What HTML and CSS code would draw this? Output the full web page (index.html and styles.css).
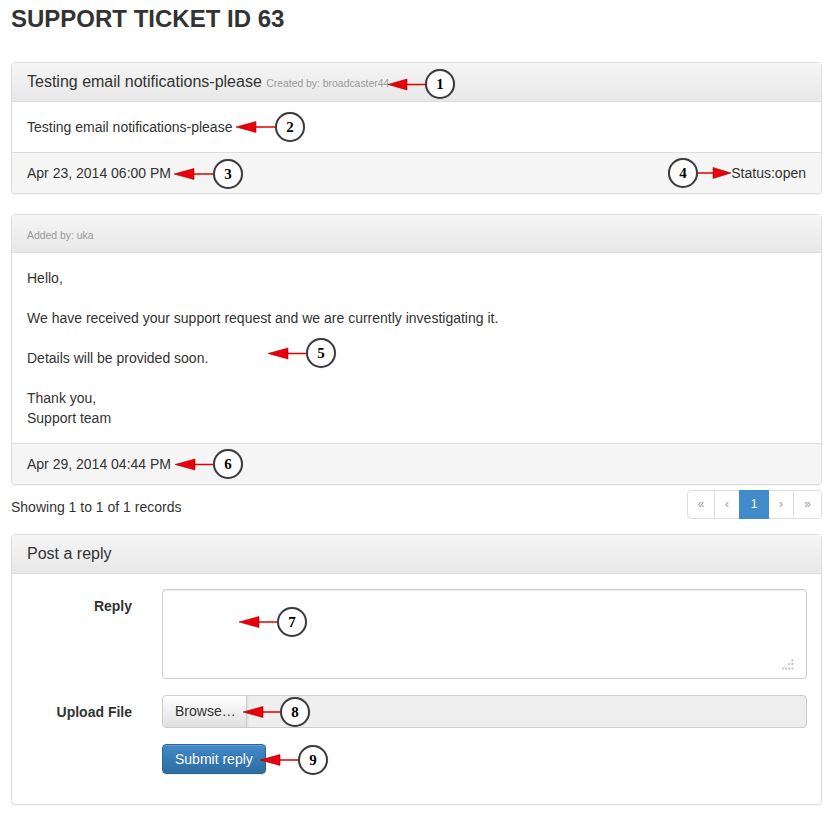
FILE: index.html
```html
<!DOCTYPE html>
<html lang="en">
<head>
<meta charset="utf-8">
<title>Support Ticket ID 63</title>
<link rel="stylesheet" href="styles.css">
</head>
<body>
<div class="canvas">
  <div class="page">
    <h1 class="title">SUPPORT TICKET ID 63</h1>

    <div class="panel">
      <div class="panel-heading">
        <h3 class="panel-title">Testing email notifications-please <small class="meta">Created by: broadcaster44</small></h3>
      </div>
      <div class="panel-body">Testing email notifications-please</div>
      <div class="panel-footer footer-split">
        <span>Apr 23, 2014 06:00 PM</span>
        <span>Status:open</span>
      </div>
    </div>

    <div class="panel panel-gap">
      <div class="panel-heading">
        <h3 class="panel-title"><small class="meta">Added by: uka</small></h3>
      </div>
      <div class="panel-body">Hello,<br><br>We have received your support request and we are currently investigating it.<br><br>Details will be provided soon.<br><br>Thank you,<br>Support team</div>
      <div class="panel-footer">Apr 29, 2014 04:44 PM</div>
    </div>

    <div class="records">
      <div class="records-info">Showing 1 to 1 of 1 records</div>
      <ul class="pagination">
        <li class="pg first">&laquo;</li>
        <li class="pg step">&lsaquo;</li>
        <li class="pg active">1</li>
        <li class="pg step">&rsaquo;</li>
        <li class="pg last">&raquo;</li>
      </ul>
    </div>

    <div class="panel reply-panel">
      <div class="panel-heading">
        <h3 class="panel-title">Post a reply</h3>
      </div>
      <div class="panel-body form-body">
        <div class="form-row">
          <label class="form-label" for="reply">Reply</label>
          <div class="textarea-wrap">
            <textarea id="reply" class="textarea"></textarea>
            <svg class="grip" width="12" height="12" viewBox="0 0 12 12">
              <rect x="9.5" y="0.5" width="1.6" height="1.6" fill="#b0b0b0"/>
              <rect x="6.3" y="4.2" width="1.6" height="1.6" fill="#b0b0b0"/>
              <rect x="9.5" y="4.2" width="1.6" height="1.6" fill="#b0b0b0"/>
              <rect x="0" y="8.8" width="1.6" height="1.6" fill="#b0b0b0"/>
              <rect x="3.2" y="8.8" width="1.6" height="1.6" fill="#b0b0b0"/>
              <rect x="6.3" y="8.8" width="1.6" height="1.6" fill="#b0b0b0"/>
              <rect x="9.5" y="8.8" width="1.6" height="1.6" fill="#b0b0b0"/>
            </svg>
          </div>
        </div>
        <div class="form-row">
          <span class="form-label">Upload File</span>
          <div class="file-input">
            <span class="browse">Browse&hellip;</span>
          </div>
        </div>
        <div class="form-row">
          <span class="form-label"></span>
          <div><button class="btn-submit" type="button">Submit reply</button></div>
        </div>
      </div>
    </div>
  </div>

  <svg class="arrows" width="835" height="830" viewBox="0 0 835 830">
    <g stroke="#e00000" stroke-width="1.5">
      <line x1="406" y1="84.5" x2="425" y2="84.5"/>
      <line x1="255" y1="127" x2="275" y2="127"/>
      <line x1="193" y1="174" x2="213" y2="174"/>
      <line x1="698" y1="173" x2="715" y2="173"/>
      <line x1="287" y1="353.5" x2="306" y2="353.5"/>
      <line x1="194" y1="464.5" x2="213" y2="464.5"/>
      <line x1="258" y1="622" x2="277" y2="622"/>
      <line x1="262" y1="712" x2="280" y2="712"/>
      <line x1="279" y1="760" x2="298" y2="760"/>
    </g>
    <g fill="#e8000b" stroke="#a80000" stroke-width="0.6">
      <polygon points="388,84.5 407,79 407,90"/>
      <polygon points="236,127 256,121.5 256,132.5"/>
      <polygon points="174,174 194,168.5 194,179.5"/>
      <polygon points="731,173 713,167.5 713,178.5"/>
      <polygon points="268,353.5 288,348 288,359"/>
      <polygon points="175,464.5 195,459 195,470"/>
      <polygon points="239,622 259,616.5 259,627.5"/>
      <polygon points="243,712 263,706.5 263,717.5"/>
      <polygon points="260,760 280,754.5 280,765.5"/>
    </g>
  </svg>

  <div class="badge b1">1</div>
  <div class="badge b2">2</div>
  <div class="badge b3">3</div>
  <div class="badge b4">4</div>
  <div class="badge b5">5</div>
  <div class="badge b6">6</div>
  <div class="badge b7">7</div>
  <div class="badge b8">8</div>
  <div class="badge b9">9</div>
</div>
</body>
</html>
```

FILE: styles.css
```css
* { box-sizing: border-box; }

html, body {
  margin: 0;
  padding: 0;
  background: #fff;
}

body {
  font-family: "Liberation Sans", Arial, sans-serif;
  font-size: 14px;
  line-height: 20px;
  color: #333;
}

.canvas {
  position: relative;
  display: flow-root;
  width: 835px;
  min-height: 830px;
}

.page {
  width: 811px;
  margin-left: 11px;
  padding-top: 6px;
  padding-bottom: 20px;
}

.title {
  margin: 0;
  font-size: 24px;
  line-height: 26px;
  font-weight: bold;
  color: #333;
}

/* Panels */
.panel {
  margin-top: 30px;
  background: #fff;
  border: 1px solid #ddd;
  border-radius: 4px;
  box-shadow: 0 1px 1px rgba(0, 0, 0, 0.05);
}

.panel-gap { margin-top: 20px; }

.panel-heading {
  padding: 10px 15px;
  background: linear-gradient(to bottom, #f5f5f5 0%, #e8e8e8 100%);
  border-bottom: 1px solid #ddd;
  border-radius: 3px 3px 0 0;
}

.panel-title {
  margin: 0;
  font-size: 16px;
  font-weight: normal;
  line-height: 1.1;
  color: #333;
}

.meta {
  font-size: 10.4px;
  color: #999;
}

.panel-body {
  padding: 15px;
}

.panel-footer {
  padding: 10px 15px;
  background: #f5f5f5;
  border-top: 1px solid #ddd;
  border-radius: 0 0 3px 3px;
}

.footer-split {
  display: flex;
  justify-content: space-between;
}

/* Records row */
.records {
  margin-top: 5px;
  display: flex;
  justify-content: space-between;
  align-items: flex-start;
}

.records-info {
  margin-top: 7px;
}

.pagination {
  display: flex;
  margin: 0;
  padding: 0;
  list-style: none;
}

.pg {
  width: 29px;
  padding: 5px 0;
  text-align: center;
  font-size: 12px;
  line-height: 17px;
  color: #999;
  background: #fff;
  border: 1px solid #ddd;
  margin-left: -1px;
}

.pg.step { width: 26px; }

.pg.first {
  width: 28px;
  margin-left: 0;
  border-radius: 4px 0 0 4px;
}

.pg.last {
  border-radius: 0 4px 4px 0;
}

.pg.active {
  width: 30px;
  color: #fff;
  background: #428bca;
  border-color: #428bca;
  position: relative;
}

/* Reply panel */
.reply-panel {
  margin-top: 15px;
}

.form-body {
  padding: 15px 14px 30px 15px;
}

.form-row {
  display: grid;
  grid-template-columns: 105px 1fr;
  column-gap: 30px;
  margin-bottom: 16px;
}

.form-row:last-child { margin-bottom: 0; }

.form-label {
  padding-top: 7px;
  text-align: right;
  font-weight: bold;
}

.textarea-wrap {
  position: relative;
  height: 90px;
}

.textarea {
  display: block;
  width: 100%;
  height: 90px;
  resize: none;
  border: 1px solid #ccc;
  border-radius: 4px;
  box-shadow: inset 0 1px 1px rgba(0, 0, 0, 0.075);
  font-family: inherit;
  font-size: 14px;
  padding: 6px 12px;
  background: #fff;
}

.grip {
  position: absolute;
  right: 13px;
  bottom: 8px;
}

.file-input {
  display: flex;
  height: 33px;
  background: #eee;
  border: 1px solid #ccc;
  border-radius: 4px;
  overflow: hidden;
}

.browse {
  display: block;
  width: 84px;
  padding: 5px 12px;
  line-height: 21px;
  color: #333;
  background: linear-gradient(to bottom, #ffffff 0%, #e0e0e0 100%);
  border-right: 1px solid #ccc;
  box-shadow: 1px 0 2px rgba(0, 0, 0, 0.08);
}

.btn-submit {
  display: block;
  height: 30px;
  padding: 5px 12px;
  font-family: inherit;
  font-size: 14px;
  line-height: 18px;
  color: #fff;
  background: linear-gradient(to bottom, #428bca 0%, #2d6ca2 100%);
  border: 1px solid #2b669a;
  border-radius: 4px;
  box-shadow: inset 0 1px 0 rgba(255, 255, 255, 0.15), 0 1px 1px rgba(0, 0, 0, 0.075);
  text-shadow: 0 -1px 0 rgba(0, 0, 0, 0.2);
}

/* Callouts */
.arrows {
  position: absolute;
  left: 0;
  top: 0;
  pointer-events: none;
}

.badge {
  position: absolute;
  width: 30px;
  height: 30px;
  border: 2px solid #3c3c3c;
  border-radius: 50%;
  background: #fff;
  font-family: "Liberation Serif", "Times New Roman", serif;
  font-weight: bold;
  font-size: 15px;
  line-height: 26px;
  text-align: center;
  color: #000;
  box-shadow: 0 0 1px rgba(0, 0, 0, 0.3);
}

.b1 { left: 425px; top: 69px; }
.b2 { left: 275px; top: 112px; }
.b3 { left: 213px; top: 159px; }
.b4 { left: 668px; top: 158px; }
.b5 { left: 306px; top: 338px; }
.b6 { left: 213px; top: 449px; }
.b7 { left: 277px; top: 607px; }
.b8 { left: 280px; top: 697px; }
.b9 { left: 298px; top: 745px; }
```
